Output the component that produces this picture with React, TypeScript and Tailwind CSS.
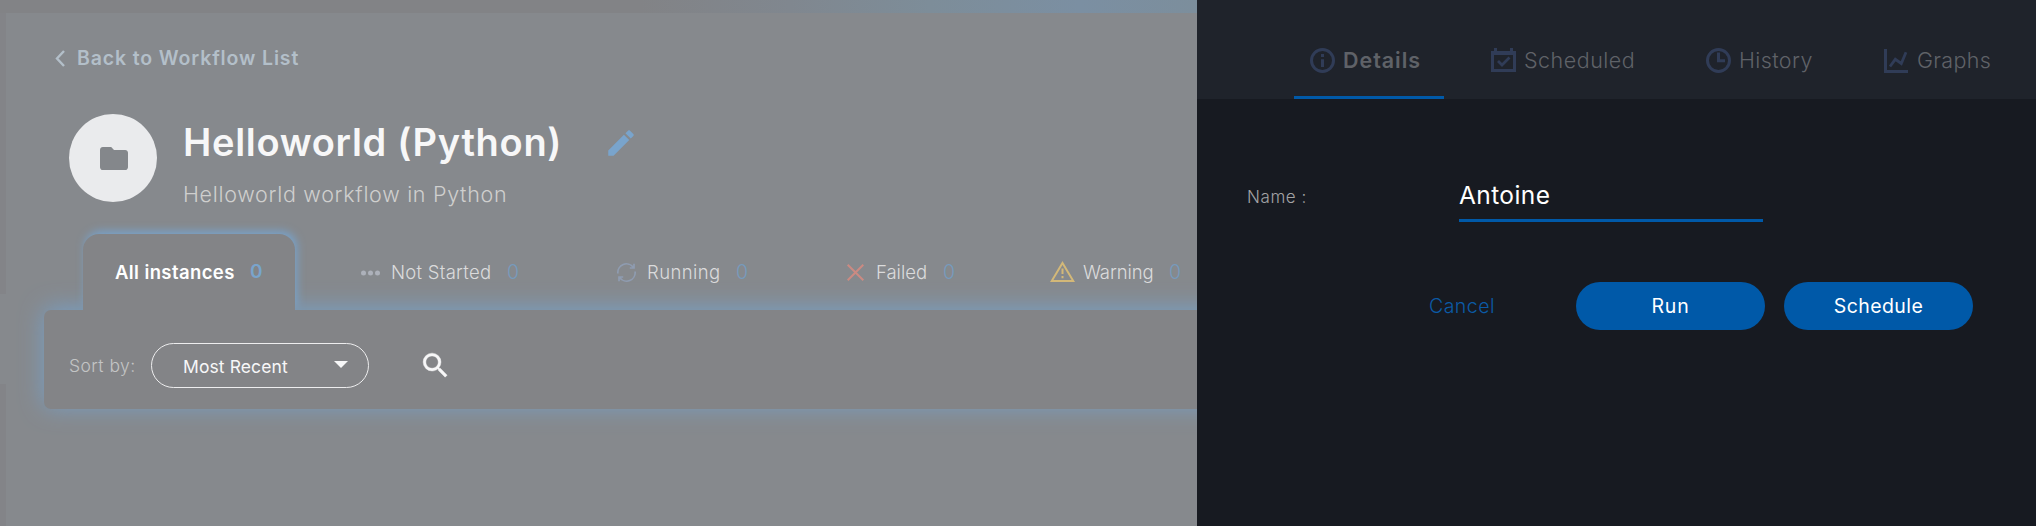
import type { ReactNode } from "react";

function ChevronIcon() {
  return (
    <svg width="10" height="17" viewBox="0 0 10 17" fill="none" stroke="currentColor" strokeWidth="2.4">
      <path d="M9 1L2 8.5L9 16" />
    </svg>
  );
}

function FolderIcon() {
  return (
    <svg width="28" height="23" viewBox="2 4 20 16" preserveAspectRatio="none" fill="currentColor">
      <path d="M10 4H4c-1.1 0-2 .9-2 2v12c0 1.1.9 2 2 2h16c1.1 0 2-.9 2-2V8c0-1.1-.9-2-2-2h-8l-2-2z" />
    </svg>
  );
}

function PencilIcon() {
  return (
    <svg width="34" height="34" viewBox="0 0 24 24" fill="currentColor">
      <path d="M3 17.25V21h3.75L17.81 9.94l-3.75-3.75L3 17.25zM20.71 7.04c.39-.39.39-1.02 0-1.41l-2.34-2.34c-.39-.39-1.02-.39-1.41 0l-1.83 1.83 3.75 3.75 1.83-1.83z" />
    </svg>
  );
}

function SearchIcon() {
  return (
    <svg width="33" height="33" viewBox="0 0 24 24" fill="currentColor" stroke="currentColor" strokeWidth=".3">
      <path d="M15.5 14h-.79l-.28-.27A6.471 6.471 0 0 0 16 9.5 6.5 6.5 0 1 0 9.5 16c1.61 0 3.09-.59 4.23-1.57l.27.28v.79l5 4.99L20.49 19l-4.99-5zm-6 0C7.01 14 5 11.99 5 9.5S7.01 5 9.5 5 14 7.01 14 9.5 11.99 14 9.5 14z" />
    </svg>
  );
}

function DotsIcon() {
  return (
    <svg width="19" height="6" viewBox="0 0 19 6" fill="#adb1ba">
      <circle cx="2.5" cy="3" r="2.5" />
      <circle cx="9.5" cy="3" r="2.5" />
      <circle cx="16.5" cy="3" r="2.5" />
    </svg>
  );
}

function SyncIcon() {
  return (
    <svg width="19" height="19" viewBox="0 0 19 19" fill="none" stroke="#8f9cb1" strokeWidth="1.7">
      <path d="M.9 10.5A8.6 8.6 0 0 1 16.3 4.3M17 .8V5H12.8" />
      <path d="M18.1 8.5A8.6 8.6 0 0 1 2.7 14.7M2 18.2V14H6.2" />
    </svg>
  );
}

function CrossIcon() {
  return (
    <svg width="17" height="17" viewBox="0 0 17 17" fill="none" stroke="#cb8a82" strokeWidth="2">
      <path d="M.7 .7L16.3 16.3M16.3 .7L.7 16.3" />
    </svg>
  );
}

function WarningIcon() {
  return (
    <svg width="25" height="21" viewBox="0 0 25 21" fill="none" stroke="#d3b878" strokeWidth="2" className="mb-[3px]">
      <path d="M12.5 2L23.3 20H1.7Z" />
      <path d="M12.5 7.5V13M12.5 15V17.2" />
    </svg>
  );
}

function InfoIcon() {
  return (
    <svg width="25" height="25" viewBox="0 0 25 25">
      <circle cx="12.5" cy="12.5" r="11" fill="none" stroke="currentColor" strokeWidth="3" />
      <path d="M11 6h3v3h-3zM11 11.3h3v7.7h-3z" fill="currentColor" />
    </svg>
  );
}

function CalendarIcon() {
  return (
    <svg width="25" height="25" viewBox="0 0 25 25">
      <path d="M3 0h3v3h13V0h3v3h3v21H0V3h3zM3 7v14h19V7z" fill="currentColor" fillRule="evenodd" />
      <path d="M7 13L11 17L18.5 9.5" fill="none" stroke="currentColor" strokeWidth="2.8" />
    </svg>
  );
}

function ClockIcon() {
  return (
    <svg width="25" height="25" viewBox="0 0 25 25">
      <circle cx="12.5" cy="12.5" r="11" fill="none" stroke="currentColor" strokeWidth="3" />
      <path d="M11 4.5h3v6.8h5v3h-8z" fill="currentColor" />
    </svg>
  );
}

function GraphIcon() {
  return (
    <svg width="24" height="24" viewBox="0 0 24 24" fill="none" stroke="currentColor" strokeWidth="3">
      <path d="M1.5 0V22.5H24" />
      <path d="M6 17.5L11.3 10.3L17.3 14.5L22 3.3" strokeWidth="2.8" />
    </svg>
  );
}

function Status({ icon, label, className, labelClass }: { icon: ReactNode; label: string; className: string; labelClass: string }) {
  return (
    <div className={"flex shrink-0 items-center pt-[1px] text-[18.5px] font-light text-[#dbdbdc] " + className}>
      {icon}
      <span className={"shrink-0 whitespace-nowrap " + labelClass}>{label}</span>
      <span className="ml-4 w-3 text-[19.5px] text-[#769bbd]">0</span>
    </div>
  );
}

function Tab({ icon, label, className }: { icon: ReactNode; label: string; className: string }) {
  return (
    <div className={"flex h-[99px] shrink-0 items-center border-b-[3px] pt-[25px] text-[21.5px] text-[#5f6268] " + className}>
      <span className="text-[#303c57]">{icon}</span>
      {label}
    </div>
  );
}

function Workflow() {
  return (
    <section className="flex h-full w-[1197px] shrink-0 flex-col overflow-hidden bg-[#86898d]">
      <div className="h-[13px] shrink-0 bg-[linear-gradient(90deg,#828386_0px,#828386_640px,#80878f_790px,#7d8d99_930px,#7b8fa2_1080px,#7c8e9c_1197px)]" />
      <div className="flex min-h-0 flex-1">
        <div className="flex w-[6px] shrink-0 flex-col justify-between">
          <div className="h-[281px] bg-[#838488]" />
          <div className="h-[142px] bg-[#838488]" />
        </div>
        <div className="flex w-[1191px] flex-col">
          <a className="mt-[30px] flex h-[30px] items-center gap-[12px] pl-[49px] text-[19.5px] font-semibold tracking-[0.86px] text-[#b3bfc9]">
            <ChevronIcon />
            <span className="pt-[1px]">Back to Workflow List</span>
          </a>
          <header className="mt-[41px] flex h-[120px] shrink-0 items-start pl-[63px]">
            <div className="flex size-[88px] items-center justify-center rounded-full bg-[#eaebed] pt-[1px] pl-[2px] text-[#84878b]">
              <FolderIcon />
            </div>
            <div className="ml-[26px] pt-[7px]">
              <div className="flex h-[44px] items-center text-[#f7f7f8]">
                <h1 className="w-[376px] pb-[2px] text-[38px] font-semibold tracking-[0.69px] whitespace-nowrap">Helloworld (Python)</h1>
                <span className="ml-[45px] text-[#79a4cc]">
                  <PencilIcon />
                </span>
              </div>
              <p className="mt-[14px] text-[21.5px] leading-[30px] font-light tracking-[0.7px] text-[#cfcfce]">Helloworld workflow in Python</p>
            </div>
          </header>
          <nav className="flex h-[76px] shrink-0 pl-[77px]">
            <div className="relative z-10 flex w-[212px] shrink-0 items-center rounded-t-[16px] bg-[#838487] pt-[1px] pl-[32px] text-[18.5px] font-semibold text-white shadow-[2px_-3px_8px_#78a2ca] [clip-path:inset(-20px_-20px_0_-20px)]">
              <span className="w-[119px] shrink-0 tracking-[0.4px] whitespace-nowrap">All instances</span>
              <span className="ml-4 text-[19px] text-[#79a4cc]">0</span>
            </div>
            <div className="relative z-10 flex">
              <Status icon={<DotsIcon />} label="Not Started" className="ml-[66px]" labelClass="ml-[11px] w-[100px] tracking-[0.27px]" />
              <Status icon={<SyncIcon />} label="Running" className="ml-[98px]" labelClass="ml-[11px] w-[73px] tracking-[0.4px]" />
              <Status icon={<CrossIcon />} label="Failed" className="ml-[99px]" labelClass="ml-[12px] w-[51px]" />
              <Status icon={<WarningIcon />} label="Warning" className="ml-[95px]" labelClass="ml-[8px] w-[70px] tracking-[-0.1px]" />
            </div>
          </nav>
          <div className="ml-[38px] flex h-[99px] w-[1200px] shrink-0 items-start rounded-[7px] bg-[#838487] pt-[33px] pl-[25px] shadow-[0_-2px_23px_#789fc4]">
            <div className="flex h-[45px] items-center">
              <span className="w-[66px] pt-[2px] text-[17.5px] font-light tracking-[0.45px] whitespace-nowrap text-[#c3c4c5]">Sort by:</span>
              <button className="ml-4 flex h-[45px] w-[218px] items-center justify-between rounded-full border border-[#ededee] pr-5 pl-[31px] text-[17.5px] text-[#f7f7f8]">
                <span className="pt-[3px] tracking-[0.1px]">Most Recent</span>
                <svg width="14" height="7" viewBox="0 0 14 7" fill="currentColor" className="mb-[3px]">
                  <path d="M0 0H14L7 7Z" />
                </svg>
              </button>
              <span className="ml-[50px] text-[#f7f7f8]">
                <SearchIcon />
              </span>
            </div>
          </div>
        </div>
      </div>
    </section>
  );
}

function RunPanel() {
  return (
    <section className="flex h-full flex-1 flex-col bg-[#171a21]">
      <nav className="flex h-[99px] shrink-0 bg-[#1f232b] pl-[97px]">
        <Tab icon={<InfoIcon />} label="Details" className="w-[150px] gap-2 border-[#0059a8] pl-4 font-semibold tracking-[0.95px]" />
        <Tab icon={<CalendarIcon />} label="Scheduled" className="ml-[47px] w-[144px] gap-2 border-transparent font-light tracking-[0.5px]" />
        <Tab icon={<ClockIcon />} label="History" className="ml-[71px] w-[107px] gap-2 border-transparent font-light tracking-[0.4px]" />
        <Tab icon={<GraphIcon />} label="Graphs" className="ml-[71px] gap-[9px] border-transparent font-light tracking-[0.3px]" />
      </nav>
      <div className="mt-[71px] flex h-[52px] shrink-0 pl-[50px]">
        <label className="mt-[1px] w-[212px] text-[17px] leading-[52px] font-light tracking-[0.58px] text-[#a3a3a5]">Name :</label>
        <div className="flex w-[304px] items-center border-b-[3px] border-[#0059a8] pt-[1px] text-[24.5px] tracking-[0.4px] text-white">Antoine</div>
      </div>
      <div className="mt-[60px] flex h-12 shrink-0 items-center justify-end pr-[63px] text-[19.5px] text-white">
        <button className="mr-[81px] w-[66px] pt-[2px] font-light tracking-[0.48px] text-[#0b5aa6]">Cancel</button>
        <button className="mr-[19px] h-12 w-[189px] rounded-full bg-[#0059a8] pt-[2px] tracking-[0.8px]">Run</button>
        <button className="h-12 w-[189px] rounded-full bg-[#0059a8] pt-[2px] tracking-[0.4px]">Schedule</button>
      </div>
    </section>
  );
}

export default function App() {
  return (
    <main className="flex h-[526px] w-[2036px] overflow-hidden font-['Inter',sans-serif]">
      <Workflow />
      <RunPanel />
    </main>
  );
}
